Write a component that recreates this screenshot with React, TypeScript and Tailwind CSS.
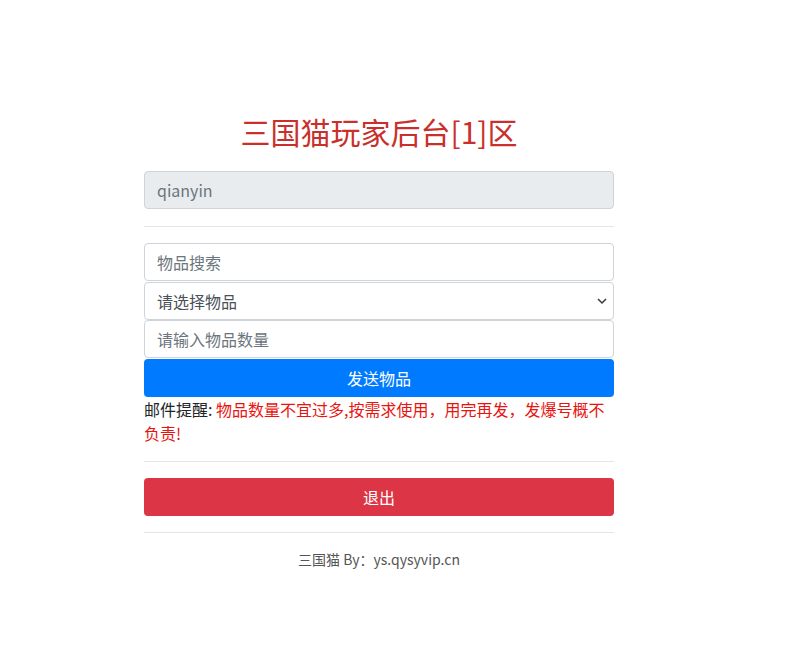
import { useState } from 'react'

const FONT = '"Microsoft YaHei", "Noto Sans CJK SC", "Noto Sans", sans-serif'

function Chevron() {
  return (
    <svg width="10" height="7" viewBox="0 0 10 7" className="pointer-events-none absolute right-[7px] top-1/2 -translate-y-1/2">
      <path d="M1 1.5 L5 5.5 L9 1.5" fill="none" stroke="#343a40" strokeWidth="1.5" />
    </svg>
  )
}

export default function App() {
  const [search, setSearch] = useState('')
  const [count, setCount] = useState('')

  return (
    <div className="min-h-[662px] bg-white text-[#212529]" style={{ fontFamily: FONT }}>
      <div className="ml-[144px] w-[470px] pt-[113px]">
        <h2 className="mb-[22px] text-center text-[30px] leading-[36px] font-normal text-[#c9302c]">
          三国猫玩家后台[1]区
        </h2>

        <input
          readOnly
          value="qianyin"
          className="block h-[38px] w-full rounded border border-[#ced4da] bg-[#e9ecef] px-3 text-base text-[#6c757d] outline-none"
        />

        <hr className="mt-[17px] mb-4 border-t border-[#e5e5e5]" />

        <input
          value={search}
          onChange={e => setSearch(e.target.value)}
          placeholder="物品搜索"
          className="mb-px block h-[38px] w-full rounded border border-[#ced4da] bg-white px-3 text-base outline-none placeholder:text-[#6c757d]"
        />
        <div className="relative">
          <select className="block h-[38px] w-full appearance-none rounded border border-[#ced4da] bg-white px-3 text-base text-[#495057] outline-none">
            <option>请选择物品</option>
          </select>
          <Chevron />
        </div>
        <input
          value={count}
          onChange={e => setCount(e.target.value)}
          placeholder="请输入物品数量"
          className="mb-px block h-[38px] w-full rounded border border-[#ced4da] bg-white px-3 text-base outline-none placeholder:text-[#6c757d]"
        />
        <button className="block h-[38px] w-full rounded bg-[#007bff] text-base text-white">发送物品</button>

        <p className="text-base leading-6">
          邮件提醒: <span className="text-[#e8140f]">物品数量不宜过多,按需求使用，用完再发，发爆号概不负责!</span>
        </p>

        <hr className="my-4 border-t border-[#e5e5e5]" />

        <button className="block h-[38px] w-full rounded bg-[#dc3545] text-base text-white">退出</button>

        <hr className="my-4 border-t border-[#e5e5e5]" />

        <p className="text-center text-sm leading-[21px] text-[#555]">三国猫 By：ys.qysyvip.cn</p>
      </div>
    </div>
  )
}
